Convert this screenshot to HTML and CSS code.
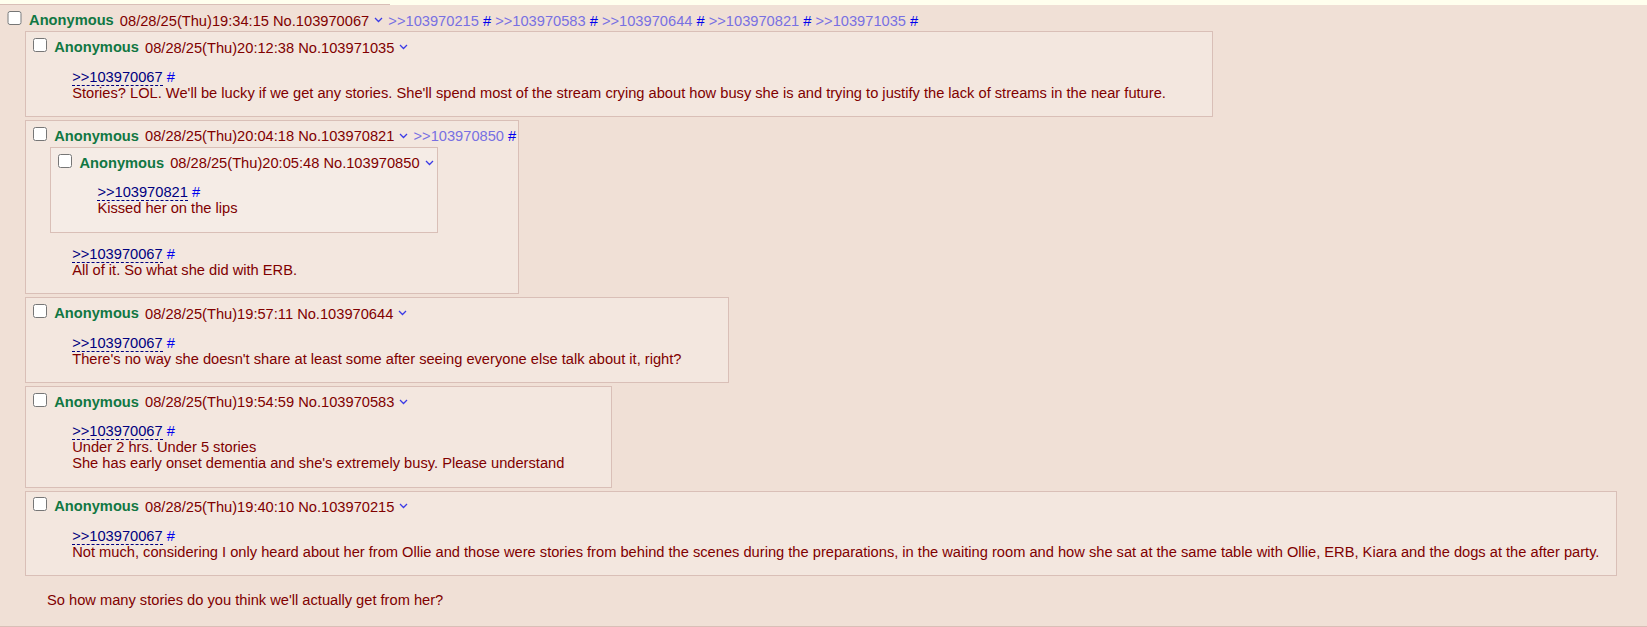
FILE: index.html
```html
<!DOCTYPE html>
<html lang="en">
<head>
	<meta charset="UTF-8">
	<title>Thread</title>
	<link rel="stylesheet" href="styles.css">
</head>
<body>
	<div class="prev"></div>
	<div class="post reply">
		<div class="post-info">
			<input type="checkbox"> <span class="name">Anonymous</span> <span class="date">08/28/25(Thu)19:34:15</span> <span class="num">No.103970067</span> <a class="menu"><svg width="9" height="6" viewBox="0 0 9 6"><polyline points="1,1 4.5,4.5 8,1"/></svg></a> <a class="backlink">&gt;&gt;103970215</a> <a class="hash">#</a> <a class="backlink">&gt;&gt;103970583</a> <a class="hash">#</a> <a class="backlink">&gt;&gt;103970644</a> <a class="hash">#</a> <a class="backlink">&gt;&gt;103970821</a> <a class="hash">#</a> <a class="backlink">&gt;&gt;103971035</a> <a class="hash">#</a>
		</div>

		<div class="post inline">
			<div class="post-info">
				<input type="checkbox"> <span class="name">Anonymous</span> <span class="date">08/28/25(Thu)20:12:38</span> <span class="num">No.103971035</span> <a class="menu"><svg width="9" height="6" viewBox="0 0 9 6"><polyline points="1,1 4.5,4.5 8,1"/></svg></a>
			</div>
			<blockquote class="message"><a class="quote">&gt;&gt;103970067</a> <a class="hash">#</a><br>Stories? LOL. We'll be lucky if we get any stories. She'll spend most of the stream crying about how busy she is and trying to justify the lack of streams in the near future.</blockquote>
		</div>

		<div class="post inline">
			<div class="post-info">
				<input type="checkbox"> <span class="name">Anonymous</span> <span class="date">08/28/25(Thu)20:04:18</span> <span class="num">No.103970821</span> <a class="menu"><svg width="9" height="6" viewBox="0 0 9 6"><polyline points="1,1 4.5,4.5 8,1"/></svg></a> <a class="backlink">&gt;&gt;103970850</a> <a class="hash">#</a>
			</div>
			<div class="post inline">
				<div class="post-info">
					<input type="checkbox"> <span class="name">Anonymous</span> <span class="date">08/28/25(Thu)20:05:48</span> <span class="num">No.103970850</span> <a class="menu"><svg width="9" height="6" viewBox="0 0 9 6"><polyline points="1,1 4.5,4.5 8,1"/></svg></a>
				</div>
				<blockquote class="message"><a class="quote">&gt;&gt;103970821</a> <a class="hash">#</a><br>Kissed her on the lips</blockquote>
			</div>
			<blockquote class="message"><a class="quote">&gt;&gt;103970067</a> <a class="hash">#</a><br>All of it. So what she did with ERB.</blockquote>
		</div>

		<div class="post inline">
			<div class="post-info">
				<input type="checkbox"> <span class="name">Anonymous</span> <span class="date">08/28/25(Thu)19:57:11</span> <span class="num">No.103970644</span> <a class="menu"><svg width="9" height="6" viewBox="0 0 9 6"><polyline points="1,1 4.5,4.5 8,1"/></svg></a>
			</div>
			<blockquote class="message"><a class="quote">&gt;&gt;103970067</a> <a class="hash">#</a><br>There's no way she doesn't share at least some after seeing everyone else talk about it, right?</blockquote>
		</div>

		<div class="post inline">
			<div class="post-info">
				<input type="checkbox"> <span class="name">Anonymous</span> <span class="date">08/28/25(Thu)19:54:59</span> <span class="num">No.103970583</span> <a class="menu"><svg width="9" height="6" viewBox="0 0 9 6"><polyline points="1,1 4.5,4.5 8,1"/></svg></a>
			</div>
			<blockquote class="message"><a class="quote">&gt;&gt;103970067</a> <a class="hash">#</a><br>Under 2 hrs. Under 5 stories<br>She has early onset dementia and she's extremely busy. Please understand</blockquote>
		</div>

		<div class="post inline">
			<div class="post-info">
				<input type="checkbox"> <span class="name">Anonymous</span> <span class="date">08/28/25(Thu)19:40:10</span> <span class="num">No.103970215</span> <a class="menu"><svg width="9" height="6" viewBox="0 0 9 6"><polyline points="1,1 4.5,4.5 8,1"/></svg></a>
			</div>
			<blockquote class="message"><a class="quote">&gt;&gt;103970067</a> <a class="hash">#</a><br>Not much, considering I only heard about her from Ollie and those were stories from behind the scenes during the preparations, in the waiting room and how she sat at the same table with Ollie, ERB, Kiara and the dogs at the after party.</blockquote>
		</div>

		<blockquote class="message last">So how many stories do you think we'll actually get from her?</blockquote>
	</div>
</body>
</html>
```

FILE: styles.css
```css
*{
	box-sizing: border-box;
}
html, body{
	margin: 0;
	padding: 0;
}
body{
	background-color: #FFFFEE;
	color: #800000;
	font-family: "Liberation Sans", Arial, sans-serif;
	font-size: 14.67px;
	line-height: 16px;
	overflow: hidden;
}
.prev{
	width: 390px;
	height: 5px;
	border-bottom: 1px solid #D9BFB7;
}
.post{
	background-color: #F0E0D6;
	padding: 2.2px;
}
.reply{
	padding: 2.6px 30px 2.2px 3px;
	border-bottom: 1px solid #D9BFB7;
}
.inline{
	display: flow-root;
	width: fit-content;
	max-width: calc(100% - 22px);
	margin: 3px 0 3px 22px;
	border: 1px solid #D9BFB7;
	background-color: rgba(255, 255, 255, 0.22);
}
.post-info{
	white-space: nowrap;
}
.post-info input{
	width: 14.3px;
	height: 14.3px;
	margin: 3.3px 3.3px 3.3px 4.4px;
}
.name{
	color: #117743;
	font-weight: bold;
	margin-right: 2px;
}
.menu svg{
	fill: none;
	stroke: #3B3BE6;
	stroke-width: 1.3;
	margin: 0 1px;
	vertical-align: 2px;
}
a{
	cursor: pointer;
}
.backlink{
	color: #7870E2;
}
.hash{
	color: #0000EE;
}
.quote{
	color: #000080;
	border-bottom: 1px dashed #000080;
}
.message{
	margin: 13.2px 44px;
	white-space: nowrap;
}
.message.last{
	margin-top: 16px;
	margin-bottom: 15px;
}
```
